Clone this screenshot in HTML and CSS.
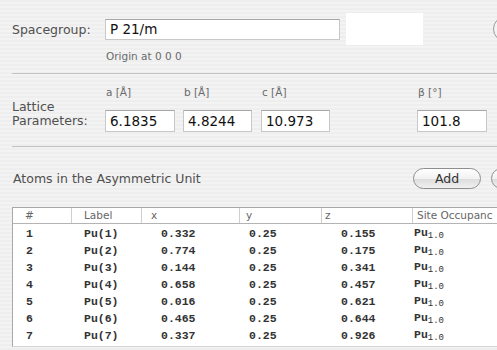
FILE: index.html
```html
<!DOCTYPE html>
<html lang="en">
<head>
    <meta charset="UTF-8">
    <title>Crystal Structure</title>
    <link rel="stylesheet" href="styles.css">
</head>
<body>
    <div class="window">
        <!-- Spacegroup -->
        <div class="section sg-section">
            <div class="sg-row">
                <label class="field-label" for="spacegroup">Spacegroup:</label>
                <input type="text" id="spacegroup" class="text-input sg-input" value="P 21/m">
                <div class="sg-preview"></div>
                <div class="round-btn"></div>
            </div>
            <div class="origin">Origin at 0 0 0</div>
        </div>

        <!-- Lattice -->
        <div class="section lattice">
            <div class="field-label lat-label">Lattice<br>Parameters:</div>
            <div class="field f-a"><span class="unit">a [Å]</span><input type="text" class="text-input" value="6.1835"></div>
            <div class="field f-b"><span class="unit">b [Å]</span><input type="text" class="text-input" value="4.8244"></div>
            <div class="field f-c"><span class="unit">c [Å]</span><input type="text" class="text-input" value="10.973"></div>
            <div class="field f-beta"><span class="unit">β [°]</span><input type="text" class="text-input" value="101.8"></div>
        </div>

        <!-- Atoms -->
        <div class="atoms-head">
            <div class="field-label atoms-title">Atoms in the Asymmetric Unit</div>
            <button class="pill">Add</button>
            <button class="pill pill-cut"></button>
        </div>

        <div class="atom-table">
            <div class="trow thead">
                <div class="c c1">#</div>
                <div class="c c2">Label</div>
                <div class="c c3">x</div>
                <div class="c c4">y</div>
                <div class="c c5">z</div>
                <div class="c c6">Site Occupanc</div>
            </div>
            <div class="tbody" id="atoms"></div>
        </div>
    </div>

    <script>
        var atoms = [
            ['1', 'Pu(1)', '0.332', '0.25', '0.155'],
            ['2', 'Pu(2)', '0.774', '0.25', '0.175'],
            ['3', 'Pu(3)', '0.144', '0.25', '0.341'],
            ['4', 'Pu(4)', '0.658', '0.25', '0.457'],
            ['5', 'Pu(5)', '0.016', '0.25', '0.621'],
            ['6', 'Pu(6)', '0.465', '0.25', '0.644'],
            ['7', 'Pu(7)', '0.337', '0.25', '0.926']
        ];
        document.getElementById('atoms').innerHTML = atoms.map(function (a) {
            return '<div class="trow">' +
                '<div class="c c1">' + a[0] + '</div>' +
                '<div class="c c2">' + a[1] + '</div>' +
                '<div class="c c3">' + a[2] + '</div>' +
                '<div class="c c4">' + a[3] + '</div>' +
                '<div class="c c5">' + a[4] + '</div>' +
                '<div class="c c6">Pu<sub>1.0</sub></div>' +
                '</div>';
        }).join('');
    </script>
</body>
</html>
```

FILE: styles.css
```css
/* Aqua pinstripe window */
body {
    margin: 0;
    width: 497px;
    height: 350px;
    overflow: hidden;
    font-family: 'DejaVu Sans', sans-serif;
    background: repeating-linear-gradient(to bottom, #eeeeee 0, #eeeeee 2px, #f3f3f3 2px, #f3f3f3 4px);
}

.window {
    padding-left: 12px;
    width: 485px;
}

.section {
    border-bottom: 1px solid #c2c2c2;
}

.field-label {
    color: #505050;
    font-size: 12.5px;
}

.text-input {
    box-sizing: border-box;
    border: 1px solid #c8c8c8;
    border-top-color: #a6a6a6;
    background: #fff;
    font-family: 'DejaVu Sans', sans-serif;
    font-size: 13.5px;
    color: #111;
    padding: 0 0 0 4px;
    outline: none;
}

/* Spacegroup */
.sg-section {
    height: 73px;
}

.sg-row {
    display: flex;
    align-items: center;
    height: 32px;
    padding-top: 13px;
}

.sg-row .field-label {
    width: 93px;
    flex-shrink: 0;
}

.sg-input {
    width: 235px;
    height: 21px;
    flex-shrink: 0;
}

.sg-preview {
    width: 77px;
    height: 32px;
    margin-left: 6px;
    background: #fff;
    flex-shrink: 0;
}

.round-btn {
    width: 24px;
    height: 24px;
    margin-left: 70px;
    border: 1px solid #9a9a9a;
    border-radius: 50%;
    background: #f4f4f4;
    flex-shrink: 0;
}

.origin {
    margin: 5px 0 0 94px;
    font-size: 10.5px;
    line-height: 13px;
    color: #6a6a6a;
}

/* Lattice */
.lattice {
    height: 72px;
    display: flex;
    align-items: flex-end;
}

.lat-label {
    width: 93px;
    line-height: 14px;
    margin-bottom: 14px;
    padding-bottom: 4px;
}

.field {
    display: flex;
    flex-direction: column;
    gap: 11px;
    margin-bottom: 14px;
}

.field .text-input {
    width: 70px;
    height: 22px;
}

.unit {
    font-size: 10.5px;
    line-height: 13px;
    color: #6a6a6a;
    padding-left: 1px;
}

.f-b { margin-left: 8px; }
.f-b .text-input, .f-c .text-input { width: 69px; }
.f-c { margin-left: 9px; }
.f-beta { margin-left: 87px; }

/* Atoms header */
.atoms-head {
    display: flex;
    align-items: center;
    margin-top: 21px;
    height: 21px;
}

.atoms-title {
    flex: 1;
    padding-left: 1px;
}

.pill {
    width: 68px;
    height: 21px;
    border: 1px solid #8e8e8e;
    border-radius: 11px;
    background: linear-gradient(to bottom, #ffffff 0%, #f2f2f2 50%, #dcdcdc 51%, #f0f0f0 100%);
    font-family: 'DejaVu Sans', sans-serif;
    font-size: 12.5px;
    color: #333;
    padding: 0;
    flex-shrink: 0;
}

.pill-cut {
    width: 40px;
    margin-left: 10px;
    margin-right: -34px;
}

/* Table */
.atom-table {
    margin-top: 18px;
    width: 500px;
    background: #fff;
    border-top: 1px solid #a8a8a8;
    border-left: 1px solid #a8a8a8;
    border-bottom: 1px solid #d4d4d4;
}

.trow {
    display: grid;
    grid-template-columns: 59px 70px 98px 82px 91px 100px;
    height: 17px;
    align-items: center;
}

.thead {
    height: 15px;
    border-bottom: 1px solid #b4b4b4;
    font-size: 10.5px;
    color: #666;
}

.thead .c {
    height: 15px;
    line-height: 15px;
    border-right: 1px solid #cfcfcf;
    white-space: nowrap;
    overflow: hidden;
}

.thead .c1 { padding-left: 12px; }
.thead .c2 { padding-left: 12px; }
.thead .c3 { padding-left: 9px; }
.thead .c4 { padding-left: 6px; }
.thead .c5 { padding-left: 3px; }
.thead .c6 { padding-left: 4px; }

.tbody {
    padding: 1px 0 2px;
    font-family: 'Liberation Mono', monospace;
    font-weight: bold;
    font-size: 11.5px;
    color: #333;
}

.tbody .c1 { padding-left: 13px; }
.tbody .c2 { padding-left: 12px; }
.tbody .c3 { padding-left: 19px; }
.tbody .c4 { padding-left: 9px; }
.tbody .c5 { padding-left: 19px; }
.tbody .c6 { padding-left: 1px; }

sub {
    font-size: 9px;
    vertical-align: -2px;
    font-weight: normal;
}
```
